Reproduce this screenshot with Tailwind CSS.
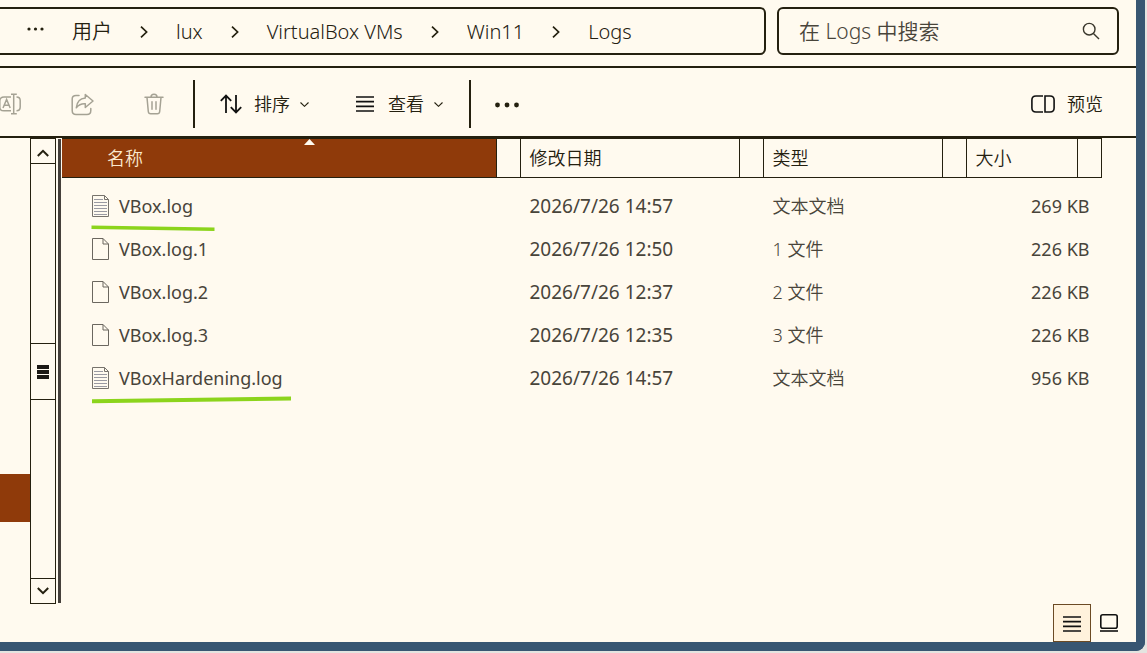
<!DOCTYPE html>
<html lang="zh-CN">
<head>
    <meta charset="UTF-8">
    <meta name="viewport" content="width=device-width, initial-scale=1.0">
    <title>Logs</title>
    <script src="https://cdn.jsdelivr.net/npm/@tailwindcss/browser@4"></script>
</head>
<body class="h-screen bg-[#e4e4e0] pr-0.5 pb-0.5 overflow-hidden font-['Noto_Sans','Noto_Sans_CJK_SC',sans-serif] font-[350] text-[#24200f]">
    <div class="flex flex-col h-full bg-[#fffaef] border-r-9 border-b-9 border-[#385672] rounded-br-[9px]">

        <!-- address bar and search -->
        <header class="flex gap-[11px] h-[68px] pt-[7px] pr-[17px] border-b-2 border-[#24200f]">
            <nav aria-label="路径" class="flex-1 h-12 border-y-2 border-r-2 border-[#24200f] rounded-r-md">
                <ol class="flex items-center gap-7 h-full pt-0.5 pl-[27px] text-[20px] leading-6 whitespace-nowrap">
                    <li>
                        <button class="block" aria-label="更多位置">
                            <svg class="w-[17px] h-6" viewBox="0 0 17 24" fill="currentColor"><circle cx="2" cy="9" r="1.6"/><circle cx="8.5" cy="9" r="1.6"/><circle cx="15" cy="9" r="1.6"/></svg>
                        </button>
                    </li>
                    <li><a href="#">用户</a></li>
                    <li><svg class="w-2 h-3" viewBox="0 0 8 12" fill="none" stroke="currentColor" stroke-width="1.7"><path d="M1 .7 6.6 6 1 11.3"/></svg></li>
                    <li><a href="#">lux</a></li>
                    <li><svg class="w-2 h-3" viewBox="0 0 8 12" fill="none" stroke="currentColor" stroke-width="1.7"><path d="M1 .7 6.6 6 1 11.3"/></svg></li>
                    <li><a href="#">VirtualBox VMs</a></li>
                    <li><svg class="w-2 h-3" viewBox="0 0 8 12" fill="none" stroke="currentColor" stroke-width="1.7"><path d="M1 .7 6.6 6 1 11.3"/></svg></li>
                    <li><a href="#">Win11</a></li>
                    <li><svg class="w-2 h-3" viewBox="0 0 8 12" fill="none" stroke="currentColor" stroke-width="1.7"><path d="M1 .7 6.6 6 1 11.3"/></svg></li>
                    <li><a href="#">Logs</a></li>
                </ol>
            </nav>
            <div class="flex items-center w-[342px] h-12 pl-5 pr-[17px] border-2 border-[#24200f] rounded-md">
                <input type="text" aria-label="搜索" placeholder="在 Logs 中搜索" class="flex-1 min-w-0 h-8 bg-transparent outline-none text-[21px] leading-8 placeholder:text-[#48443a]">
                <button aria-label="开始搜索">
                    <svg class="w-[18px] h-[18px]" viewBox="0 0 18 18" fill="none" stroke="#3a372c" stroke-width="1.4"><circle cx="7.2" cy="7.2" r="5.8"/><path d="m11.4 11.4 5.6 5.6"/></svg>
                </button>
            </div>
        </header>

        <!-- commands -->
        <div class="flex items-center h-[70px] pt-1 pr-[33px] border-b-2 border-[#24200f] text-[18px] leading-6">
            <button disabled aria-label="重命名" class="text-[#a5a294]">
                <svg class="w-[21px] h-[22px]" viewBox="0 0 21 22" fill="none" stroke="currentColor" stroke-width="1.5"><path d="M11 4H4C1.500 4-.2 5.500-.2 8v6.500c0 2 1.700 3.300 4.200 3.300h7M16.500 4c2.400 0 3.700 1.400 3.700 3.500V14c0 2.300-1.300 3.800-3.700 3.800M13.700 1.500v19M11 1.200h5.800M11 20.800h5.800M3 15l3.600-8.500L10.200 15M4.200 12.200h4.800"/></svg>
            </button>
            <button disabled aria-label="共享" class="ml-[50px] text-[#a5a294]">
                <svg class="w-[23px] h-[23px]" viewBox="0 0 23 23" fill="none" stroke="currentColor" stroke-width="1.5" stroke-linejoin="round" stroke-linecap="round"><path d="M8 2.500H5Q1.200 2.500 1.200 6v11.500Q1.200 21.500 5 21.500h11q3.800 0 3.800-4v-2"/><path d="M14.300 1.500 22 8l-7.700 6.500v-3.700C10 10.500 7.500 12 5.300 14.800 5.800 9.300 8.500 5.500 14.300 5z"/></svg>
            </button>
            <button disabled aria-label="删除" class="ml-[50px] text-[#a5a294]">
                <svg class="w-5 h-[22px]" viewBox="0 0 20 22" fill="none" stroke="currentColor" stroke-width="1.5" stroke-linecap="round"><path d="M1 4.200h18M7 4c0-3.700 6-3.700 6 0M3 4.500l1.300 14q.2 2.300 2.400 2.300h6.600q2.200 0 2.400-2.300l1.300-14M8 8.800v7.500M12 8.800v7.500"/></svg>
            </button>
            <div class="w-0.5 h-12 ml-[29px] bg-[#24200f]"></div>
            <button class="flex items-center ml-[25px]">
                <svg class="w-[22px] h-5" viewBox="0 0 22 20" fill="none" stroke="#111" stroke-width="1.8"><path d="M6 19V1.500M.8 6.800 6 1.500l5.200 5.300M16 1v17.500M10.800 13.200l5.200 5.300 5.200-5.300"/></svg>
                <span class="ml-3">排序</span>
                <svg class="w-[9px] h-[5px] ml-2.5" viewBox="0 0 9 5" fill="none" stroke="currentColor" stroke-width="1.1"><path d="m.5.5 4 3.800 4-3.800"/></svg>
            </button>
            <button class="flex items-center ml-[47px]">
                <svg class="w-[18px] h-4" viewBox="0 0 18 16" stroke="#111" stroke-width="1.7"><path d="M0 1h18M0 5.600h18M0 10.300h18M0 15h18"/></svg>
                <span class="ml-[14px]">查看</span>
                <svg class="w-[9px] h-[5px] ml-2.5" viewBox="0 0 9 5" fill="none" stroke="currentColor" stroke-width="1.1"><path d="m.5.5 4 3.800 4-3.800"/></svg>
            </button>
            <div class="w-0.5 h-12 ml-[26px] bg-[#24200f]"></div>
            <button aria-label="更多" class="ml-6">
                <svg class="w-6 h-5" viewBox="0 0 24 20" fill="currentColor"><circle cx="2.500" cy="11" r="2.400"/><circle cx="12" cy="11" r="2.400"/><circle cx="21.500" cy="11" r="2.400"/></svg>
            </button>
            <button class="flex items-center gap-3 ml-auto">
                <svg class="w-6 h-[18px]" viewBox="0 0 24 18" fill="none" stroke="#111" stroke-width="1.6"><path d="M12 1H5Q.9 1 .9 5v8q0 4 4.100 4h7"/><path d="M14 1h5q4.100 0 4.100 4v8q0 4-4.100 4h-5z"/></svg>
                预览
            </button>
        </div>

        <main class="flex flex-1 min-h-0">
            <!-- navigation pane, only its right edge shows -->
            <aside class="w-[30px] pt-[336px]">
                <a href="#" aria-label="当前文件夹" class="block h-12 bg-[#8f3a0a]"></a>
            </aside>
            <div class="flex flex-col w-[26px] border border-[#24200f]">
                <button aria-label="向上滚动" class="flex items-center justify-center h-[25px] pt-1 border-b border-[#24200f]">
                    <svg class="w-3 h-2" viewBox="0 0 12 8" fill="none" stroke="currentColor" stroke-width="2"><path d="m.8 7 5.200-5.200L11.200 7"/></svg>
                </button>
                <div class="grow-179"></div>
                <div class="flex flex-col items-center justify-center gap-px h-[57px] border-y border-[#24200f]">
                    <div class="w-3 h-1 bg-[#1c1914]"></div>
                    <div class="w-3 h-1 bg-[#1c1914]"></div>
                    <div class="w-3 h-1 bg-[#1c1914]"></div>
                </div>
                <div class="grow-178"></div>
                <button aria-label="向下滚动" class="flex items-center justify-center h-[25px] border-t border-[#24200f]">
                    <svg class="w-3 h-2" viewBox="0 0 12 8" fill="none" stroke="currentColor" stroke-width="2"><path d="m.8 1 5.200 5.200L11.200 1"/></svg>
                </button>
            </div>
            <div class="w-[3px] ml-0.5 mr-px my-px bg-[#45403b]"></div>

            <!-- file list -->
            <div class="flex-1 pr-[34px]">
                <table class="w-full table-fixed text-[18px] leading-6 text-[#48443a] whitespace-nowrap">
                    <colgroup>
                        <col>
                        <col class="w-[243px]">
                        <col class="w-[203px]">
                        <col class="w-[136px]">
                    </colgroup>
                    <thead class="text-left text-[#24200f]">
                        <tr class="border-y border-[#24200f]">
                            <th class="p-0 font-[350]">
                                <div class="relative flex items-center h-[38px] mr-[23px] pl-[45px] bg-[#8f3a0a] border-r border-[#24200f] text-[#fbe9cf]">
                                    名称
                                    <svg class="absolute top-0 left-[242px] w-[11px] h-[6px]" viewBox="0 0 11 6" fill="#fffaef"><path d="M5.500 0 11 6H0z"/></svg>
                                </div>
                            </th>
                            <th class="p-0 font-[350]"><div class="flex items-center h-[38px] mr-[23px] pl-[9px] border-x border-[#24200f]">修改日期</div></th>
                            <th class="p-0 font-[350]"><div class="flex items-center h-[38px] mr-[23px] pl-[9px] border-x border-[#24200f]">类型</div></th>
                            <th class="p-0 font-[350] border-r border-[#24200f]"><div class="flex items-center h-[38px] mr-[23px] pl-[9px] border-x border-[#24200f]">大小</div></th>
                        </tr>
                    </thead>
                    <tbody class="before:block before:h-1.5 font-normal">
                        <tr class="h-[43px]">
                            <td class="p-0">
                                <div class="relative flex items-center gap-2.5 pl-[30px]">
                                    <svg class="w-[17px] h-[22px]" viewBox="0 0 17 22" fill="none" stroke="#77736c"><path d="M.5.5h12l4 4v17H.5zM12.500.5v4h4"/><path stroke="#9a9aa2" d="M2 4.500h9M2 7.500h13M2 10.500h13M2 13.500h13M2 16.500h13M2 19.500h13"/></svg>
                                    <a href="#">VBox.log</a>
                                    <svg class="absolute top-[31px] left-[29px] w-[124px] h-[7px]" viewBox="0 0 124 7" stroke="#8cd41c" stroke-width="3.600"><path d="m.5 2.200 123 2"/></svg>
                                </div>
                            </td>
                            <td class="p-0 pl-[10px] text-[19px]">2026/7/26 14:57</td>
                            <td class="p-0 pl-[10px] font-[350]">文本文档</td>
                            <td class="p-0 pr-3 text-right">269 KB</td>
                        </tr>
                        <tr class="h-[43px]">
                            <td class="p-0">
                                <div class="flex items-center gap-2.5 pl-[30px]">
                                    <svg class="w-[17px] h-[22px]" viewBox="0 0 17 22" fill="none" stroke="#6b675f"><path d="M.5.5h10.500l5.500 5.500v15.500H.5zM11 .5V6h5.500"/></svg>
                                    <a href="#">VBox.log.1</a>
                                </div>
                            </td>
                            <td class="p-0 pl-[10px] text-[19px]">2026/7/26 12:50</td>
                            <td class="p-0 pl-[10px] font-[350]">1 文件</td>
                            <td class="p-0 pr-3 text-right">226 KB</td>
                        </tr>
                        <tr class="h-[43px]">
                            <td class="p-0">
                                <div class="flex items-center gap-2.5 pl-[30px]">
                                    <svg class="w-[17px] h-[22px]" viewBox="0 0 17 22" fill="none" stroke="#6b675f"><path d="M.5.5h10.500l5.500 5.500v15.500H.5zM11 .5V6h5.500"/></svg>
                                    <a href="#">VBox.log.2</a>
                                </div>
                            </td>
                            <td class="p-0 pl-[10px] text-[19px]">2026/7/26 12:37</td>
                            <td class="p-0 pl-[10px] font-[350]">2 文件</td>
                            <td class="p-0 pr-3 text-right">226 KB</td>
                        </tr>
                        <tr class="h-[43px]">
                            <td class="p-0">
                                <div class="flex items-center gap-2.5 pl-[30px]">
                                    <svg class="w-[17px] h-[22px]" viewBox="0 0 17 22" fill="none" stroke="#6b675f"><path d="M.5.5h10.500l5.500 5.500v15.500H.5zM11 .5V6h5.500"/></svg>
                                    <a href="#">VBox.log.3</a>
                                </div>
                            </td>
                            <td class="p-0 pl-[10px] text-[19px]">2026/7/26 12:35</td>
                            <td class="p-0 pl-[10px] font-[350]">3 文件</td>
                            <td class="p-0 pr-3 text-right">226 KB</td>
                        </tr>
                        <tr class="h-[43px]">
                            <td class="p-0">
                                <div class="relative flex items-center gap-2.5 pl-[30px]">
                                    <svg class="w-[17px] h-[22px]" viewBox="0 0 17 22" fill="none" stroke="#77736c"><path d="M.5.5h12l4 4v17H.5zM12.500.5v4h4"/><path stroke="#9a9aa2" d="M2 4.500h9M2 7.500h13M2 10.500h13M2 13.500h13M2 16.500h13M2 19.500h13"/></svg>
                                    <a href="#">VBoxHardening.log</a>
                                    <svg class="absolute top-[30px] left-[29px] w-[201px] h-[8px]" viewBox="0 0 201 8" stroke="#8cd41c" stroke-width="4"><path d="m1 5.200 199-2.700"/></svg>
                                </div>
                            </td>
                            <td class="p-0 pl-[10px] text-[19px]">2026/7/26 14:57</td>
                            <td class="p-0 pl-[10px] font-[350]">文本文档</td>
                            <td class="p-0 pr-3 text-right">956 KB</td>
                        </tr>
                    </tbody>
                </table>
            </div>
        </main>

        <!-- layout switch -->
        <footer class="flex items-center justify-end gap-[9px] h-[38px] pr-[18px]">
            <button aria-label="详细信息" class="flex items-center justify-center w-[38px] h-[38px] pt-0.5 bg-[#fff2dc] border border-[#6b4a24]">
                <svg class="w-[18px] h-4" viewBox="0 0 18 16" stroke="#111" stroke-width="1.7"><path d="M0 1h18M0 5.600h18M0 10.300h18M0 15h18"/></svg>
            </button>
            <button aria-label="大图标">
                <svg class="w-[18px] h-[18px]" viewBox="0 0 18 18" fill="none" stroke="#111" stroke-width="1.6"><rect x=".8" y=".8" width="16.400" height="13.400" rx="2"/><path d="M0 17h18"/></svg>
            </button>
        </footer>
    </div>
</body>
</html>
